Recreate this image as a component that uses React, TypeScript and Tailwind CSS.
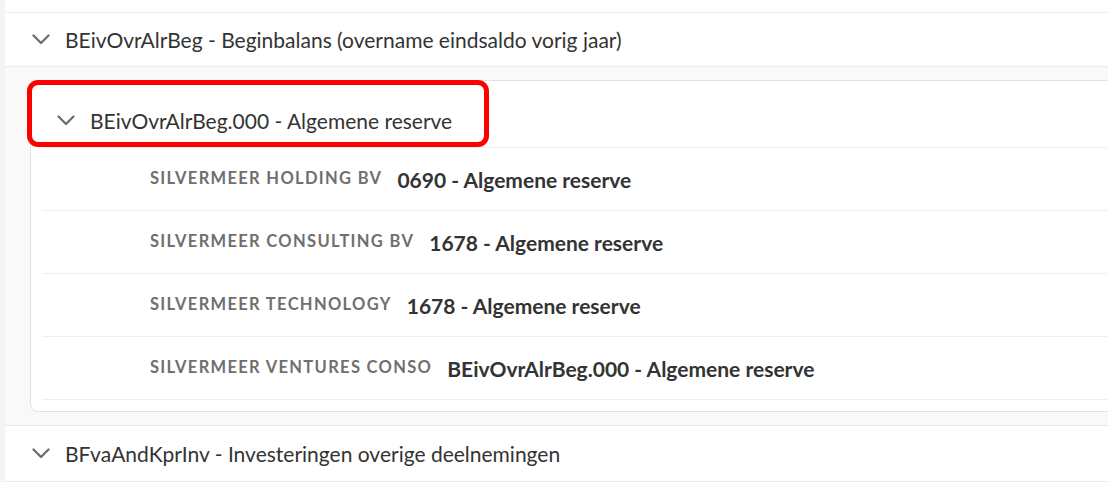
import React from "react";

function Chevron() {
  return (
    <svg width="18" height="11" viewBox="0 0 18 11" className="shrink-0">
      <polyline points="1.5,1.5 9,9 16.5,1.5" fill="none" stroke="#6b6b6b" strokeWidth="2.2" strokeLinecap="round" strokeLinejoin="round" />
    </svg>
  );
}

const rows = [
  { label: "SILVERMEER HOLDING BV", value: "0690 - Algemene reserve" },
  { label: "SILVERMEER CONSULTING BV", value: "1678 - Algemene reserve" },
  { label: "SILVERMEER TECHNOLOGY", value: "1678 - Algemene reserve" },
  { label: "SILVERMEER VENTURES CONSO", value: "BEivOvrAlrBeg.000 - Algemene reserve" },
];

export default function App() {
  return (
    <div className="relative w-[1108px] h-[482px] overflow-hidden bg-[#f4f4f4] pl-[5px] font-['Lato',sans-serif] text-[#333333]">
      <div className="h-[13px] bg-white border-b border-[#ececec]" />
      <div className="h-[54px] bg-white border-b border-[#ececec] flex items-center pl-[27px] gap-[15px]">
        <Chevron />
        <span className="text-[21px] leading-none">BEivOvrAlrBeg - Beginbalans (overname eindsaldo vorig jaar)</span>
      </div>
      <div className="bg-[#f9f9f9] pt-[13px] pl-[25px] pb-[13px] border-b border-[#e6e6e6]">
        <div className="bg-white border border-[#e2e2e2] rounded-[8px] mr-[-20px] px-[11px] pb-[11px]">
          <div className="h-[67px] pt-[12px] border-b border-[#efefef] flex items-center pl-[15px] gap-[15px]">
            <Chevron />
            <span className="text-[21px] leading-none">BEivOvrAlrBeg.000 - Algemene reserve</span>
          </div>
          {rows.map((r) => (
            <div key={r.label} className="h-[63px] border-b border-[#efefef] flex items-center pl-[108px] gap-[15px]">
              <span className="text-[16.5px] font-bold tracking-[0.08em] text-[#6f6f6f] leading-none -translate-y-[1px]">{r.label}</span>
              <span className="text-[21px] font-bold leading-none text-[#333333]">{r.value}</span>
            </div>
          ))}
        </div>
      </div>
      <div className="h-[56px] bg-white border-b border-[#ececec] flex items-center pl-[27px] gap-[15px]">
        <Chevron />
        <span className="text-[21px] leading-none">BFvaAndKprInv - Investeringen overige deelnemingen</span>
      </div>
      <div className="absolute left-[27px] top-[80px] w-[462px] h-[67px] border-[5px] border-[#ff0000] rounded-[11px]" />
    </div>
  );
}
